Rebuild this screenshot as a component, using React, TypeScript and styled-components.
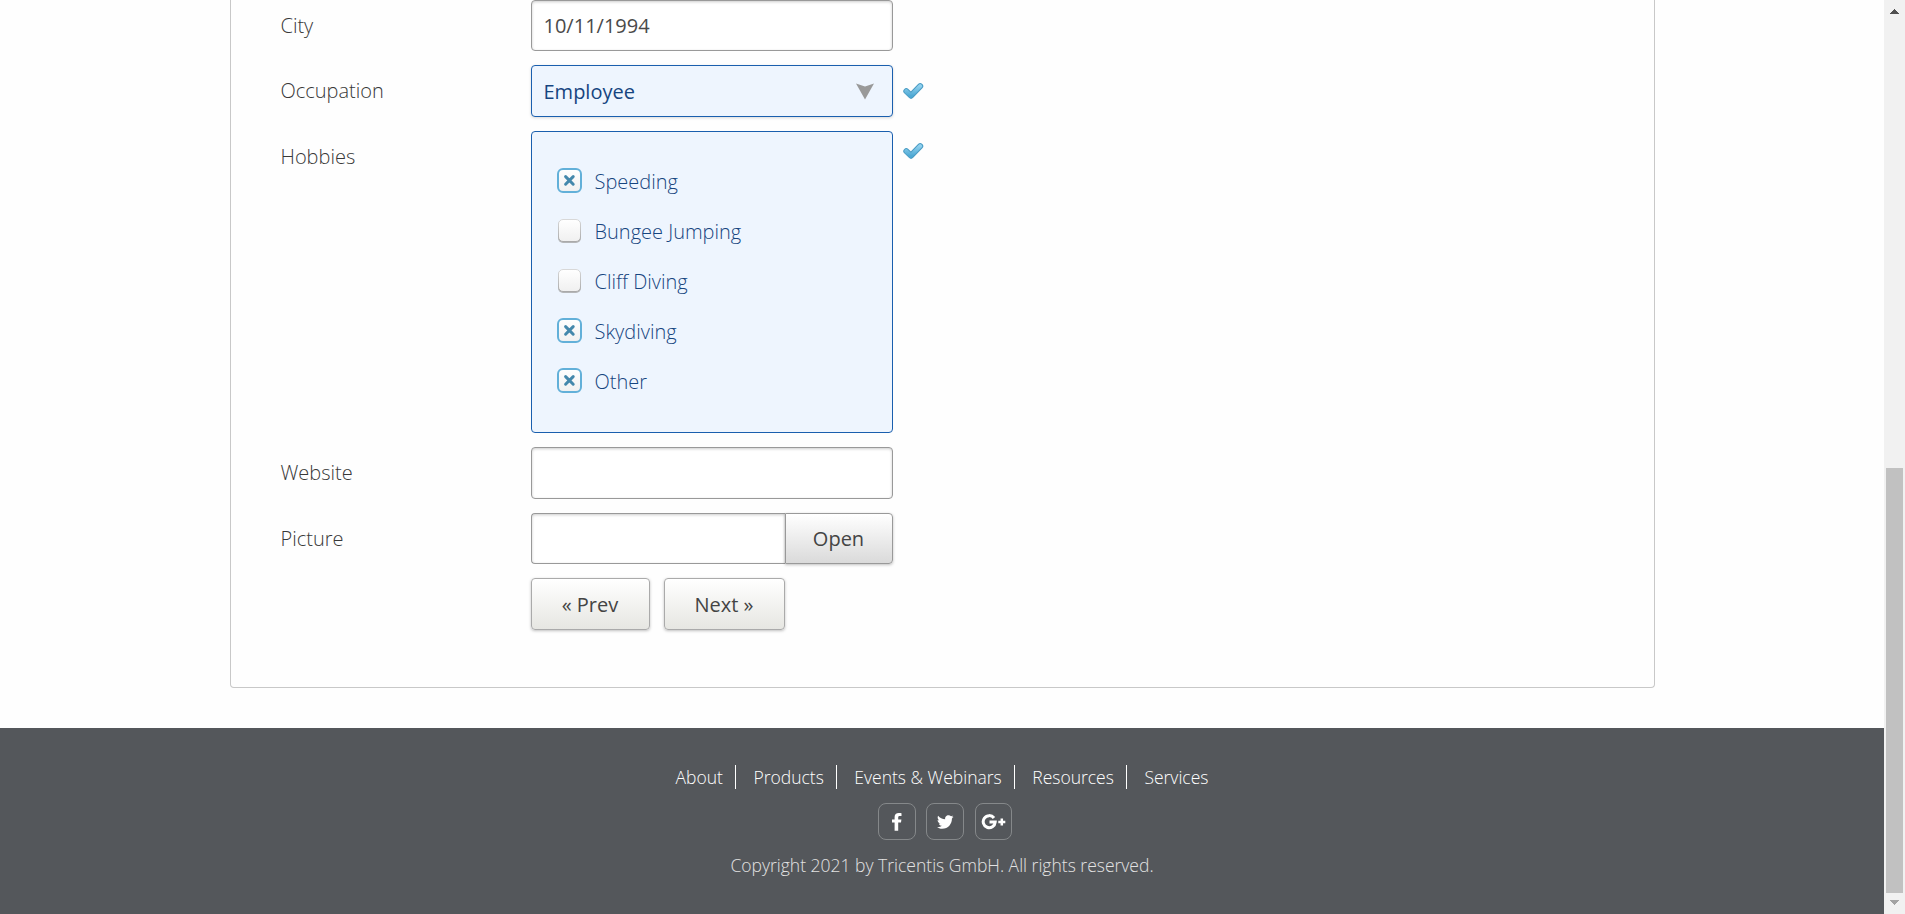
import React from "react";
import styled, { createGlobalStyle, css } from "styled-components";

const GlobalStyle = createGlobalStyle`
  *, *::before, *::after { box-sizing: border-box; }
  html, body { margin: 0; background: #fff; }
  body { overflow: hidden; font-family: "Open Sans", sans-serif; font-size: 20px; font-weight: 300; }
`;

const Screen = styled.div`
  display: flex;
  width: 1905px;
  height: 914px;
  overflow: hidden;
  background: #fefefe;
`;

const Page = styled.div`
  width: 1884px;
  display: flex;
  flex-direction: column;
`;

const Main = styled.main`
  height: 728px;
  display: flex;
  justify-content: center;
  align-items: flex-start;
`;

const FormPanel = styled.form`
  width: 1425px;
  height: 688px;
  padding-left: 50px;
  border: 1px solid #c8c8c8;
  border-top: 0;
  border-radius: 0 0 4px 4px;
  background: #fefefe;
`;

const Row = styled.div<{ $height: number }>`
  display: flex;
  align-items: flex-start;
  height: ${(p) => p.$height}px;
  margin-bottom: 14px;
`;

const Label = styled.label`
  width: 250px;
  line-height: 52px;
  color: #383838;
`;

const valid = css`
  color: #164580;
  background: #eef5fe;
  border-color: #1a5fae;
`;

const Field = styled.div<{ $width?: number; $joined?: boolean }>`
  width: ${(p) => p.$width ?? 362}px;
  height: 100%;
  padding: 0 12px;
  display: flex;
  align-items: center;
  border: 1px solid #999;
  border-radius: ${(p) => (p.$joined ? "4px 0 0 4px" : "4px")};
  ${(p) => p.$joined && "border-right: 0;"}
  background: #fff;
  box-shadow: inset 0 1px 3px rgba(0, 0, 0, 0.2);
  color: #4a4a4a;
  font-weight: 400;
`;

const Select = styled.div`
  width: 362px;
  height: 52px;
  padding: 0 18px 0 12px;
  display: flex;
  align-items: center;
  justify-content: space-between;
  border: 1px solid;
  border-radius: 4px;
  box-shadow: 0 1px 3px rgba(0, 0, 0, 0.15);
  font-weight: 400;
  ${valid}
`;

const Options = styled.div`
  width: 362px;
  height: 302px;
  padding: 24px 25px 0;
  border: 1px solid;
  border-radius: 4px;
  ${valid}
`;

const Option = styled.div`
  height: 50px;
  display: flex;
  align-items: center;
  gap: 12px;
`;

const TickSlot = styled.span<{ $top: number }>`
  display: flex;
  margin: ${(p) => p.$top}px 0 0 10px;
`;

const Button = styled.button<{ $width: number; $tone?: "dark" }>`
  width: ${(p) => p.$width}px;
  height: 100%;
  padding: 0;
  border: 1px solid ${(p) => (p.$tone ? "#999" : "#aaa")};
  border-radius: ${(p) => (p.$tone ? "0 4px 4px 0" : "4px")};
  background: linear-gradient(#fff, ${(p) => (p.$tone ? "#dadada" : "#e6e6e2")});
  box-shadow: 0 1px 3px rgba(0, 0, 0, 0.25);
  color: #444;
  font: 400 20px "Open Sans", sans-serif;
`;

const Actions = styled.div`
  display: flex;
  gap: 14px;
  height: 52px;
  padding-left: 250px;
`;

const Footer = styled.footer`
  height: 186px;
  padding-top: 37px;
  display: flex;
  flex-direction: column;
  align-items: center;
  background: #54575b;
`;

const FooterNav = styled.nav`
  display: flex;
  height: 24px;
  line-height: 24px;
`;

const FooterLink = styled.a`
  padding: 0 12.500px 0 17px;
  color: #fff;
  font-size: 17.500px;
  white-space: nowrap;
  border-right: 1px solid #fff;
  &:first-child { padding-left: 0; }
  &:last-child { padding-right: 0; border-right: 0; }
`;

const Socials = styled.div`
  display: flex;
  gap: 10px;
  margin: 14px 0 0 6px;
`;

const Social = styled.a`
  width: 38px;
  height: 37px;
  display: flex;
  align-items: center;
  justify-content: center;
  border: 1px solid #85888a;
  border-radius: 8px;
  &:last-child { width: 37px; margin-left: 1px; }
`;

const Copyright = styled.p`
  margin: 13px 0 0;
  line-height: 24px;
  color: #e2e2e2;
  font-size: 17.500px;
`;

const ScrollTrack = styled.div`
  width: 21px;
  padding: 9px 2px;
  display: flex;
  flex-direction: column;
  align-items: center;
  background: #f1f1f1;
`;

const ScrollThumb = styled.div`
  width: 17px;
  height: 425px;
  margin: auto 0 7px;
  background: #c1c1c1;
`;

const Tick = ({ top }: { top: number }) => (
  <TickSlot $top={top}>
    <svg width="22" height="18" viewBox="0 0 22 18">
      <defs>
        <linearGradient id="tick" x1="0" y1="0" x2="0" y2="1">
          <stop offset="0" stopColor="#8fd0ee" />
          <stop offset="1" stopColor="#4fa9d4" />
        </linearGradient>
      </defs>
      <path d="M3.3 9.200 8 13.700 17.200 4.200" fill="none" stroke="#4a9cc4" strokeWidth="6" strokeLinecap="round" strokeLinejoin="round" />
      <path d="M3.3 9.200 8 13.700 17.200 4.200" fill="none" stroke="url(#tick)" strokeWidth="4" strokeLinecap="round" strokeLinejoin="round" />
    </svg>
  </TickSlot>
);

const Checkbox = ({ checked }: { checked: boolean }) => (
  <svg width="26" height="26" viewBox="0 0 26 26">
    <defs>
      <linearGradient id="face" x1="0" y1="0" x2="0" y2="1">
        <stop offset="0" stopColor="#fff" />
        <stop offset="1" stopColor="#f0f0f0" />
      </linearGradient>
      <linearGradient id="edge" x1="0" y1="0" x2="0" y2="1">
        <stop offset="0" stopColor="#d8d8d8" />
        <stop offset="1" stopColor="#aaaaaa" />
      </linearGradient>
    </defs>
    {checked ? (
      <>
        <rect x="1" y="1" width="23" height="23" rx="5" fill="url(#face)" stroke="#62b0d9" strokeWidth="2" />
        <path d="M8.600 8.600 16.200 16.200M16.200 8.600 8.600 16.200" stroke="#4488ac" strokeWidth="3" strokeLinecap="round" />
      </>
    ) : (
      <>
        <rect x="1" y="2" width="23" height="23" rx="5" fill="#b4b6b8" />
        <rect x="1.500" y="1.500" width="22" height="22" rx="4.500" fill="url(#face)" stroke="url(#edge)" />
      </>
    )}
  </svg>
);

const hobbies = [
  { name: "Speeding", checked: true },
  { name: "Bungee Jumping", checked: false },
  { name: "Cliff Diving", checked: false },
  { name: "Skydiving", checked: true },
  { name: "Other", checked: true },
];

const links = ["About", "Products", "Events & Webinars", "Resources", "Services"];

export default function App() {
  return (
    <Screen>
      <GlobalStyle />
      <Page>
        <Main>
          <FormPanel>
            <Row $height={51}>
              <Label>City</Label>
              <Field>10/11/1994</Field>
            </Row>
            <Row $height={52}>
              <Label>Occupation</Label>
              <Select>
                Employee
                <svg width="18" height="18" viewBox="0 0 18 18">
                  <path d="M0 1.500 9 4.500 18 1.500 9 17.500Z" fill="#999" />
                </svg>
              </Select>
              <Tick top={17} />
            </Row>
            <Row $height={302}>
              <Label>Hobbies</Label>
              <Options>
                {hobbies.map((h) => (
                  <Option key={h.name}>
                    <Checkbox checked={h.checked} />
                    {h.name}
                  </Option>
                ))}
              </Options>
              <Tick top={11} />
            </Row>
            <Row $height={52}>
              <Label>Website</Label>
              <Field />
            </Row>
            <Row $height={51}>
              <Label>Picture</Label>
              <Field $width={254} $joined />
              <Button type="button" $width={108} $tone="dark">Open</Button>
            </Row>
            <Actions>
              <Button type="button" $width={119}>« Prev</Button>
              <Button type="button" $width={121}>Next »</Button>
            </Actions>
          </FormPanel>
        </Main>
        <Footer>
          <FooterNav>
            {links.map((l) => (
              <FooterLink key={l}>{l}</FooterLink>
            ))}
          </FooterNav>
          <Socials>
            <Social>
              <svg width="12" height="18" viewBox="0 0 12 18">
                <path d="M10.5 0.2V3.1H8.7C7.5 3.1 7.2 3.7 7.2 4.6V6.4H10.4L10 9.5H7.2V17.8H3.6V9.5H1V6.4H3.6V4.1C3.6 1.5 5.2 0 7.8 0 9 0 10 .1 10.5.2Z" fill="#fff" />
              </svg>
            </Social>
            <Social>
              <svg width="17" height="14" viewBox="0 0 17 14">
                <path d="M16.6 1.7c-.5.7-1.1 1.3-1.7 1.8v.4c0 4.6-3.5 9.8-9.8 9.8-2 0-3.8-.6-5.1-1.5 1.9.2 3.6-.3 5-1.4-1.5 0-2.8-1-3.2-2.4.5.1 1 .1 1.5-.1C1.7 8 .6 6.6.6 4.9c.5.3 1 .4 1.6.4C.7 4.3.2 2.3 1.1.7c1.7 2.1 4.3 3.5 7.1 3.6C7.7 2 9.4.2 11.5.2c1 0 1.900.4 2.500 1.100.8-.2 1.500-.4 2.200-.8-.3.8-.8 1.400-1.500 1.800.7-.1 1.300-.2 1.900-.6Z" fill="#fff" />
              </svg>
            </Social>
            <Social>
              <svg width="25" height="16" viewBox="0 0 25 16">
                <path d="M13 4A6 6 0 1 0 14.2 8.1H8.5" fill="none" stroke="#fff" strokeWidth="3" />
                <path d="M20.800 4.500V11.500M17.300 8H24.300" stroke="#fff" strokeWidth="2.500" />
              </svg>
            </Social>
          </Socials>
          <Copyright>Copyright 2021 by Tricentis GmbH. All rights reserved.</Copyright>
        </Footer>
      </Page>
      <ScrollTrack>
        <svg width="9" height="5" viewBox="0 0 9 5" shapeRendering="crispEdges"><path d="M0 5 4.5 0 9 5Z" fill="#505050" /></svg>
        <ScrollThumb />
        <svg width="9" height="5" viewBox="0 0 9 5" shapeRendering="crispEdges"><path d="M0 0H9L4.500 5Z" fill="#a3a3a3" /></svg>
      </ScrollTrack>
    </Screen>
  );
}
